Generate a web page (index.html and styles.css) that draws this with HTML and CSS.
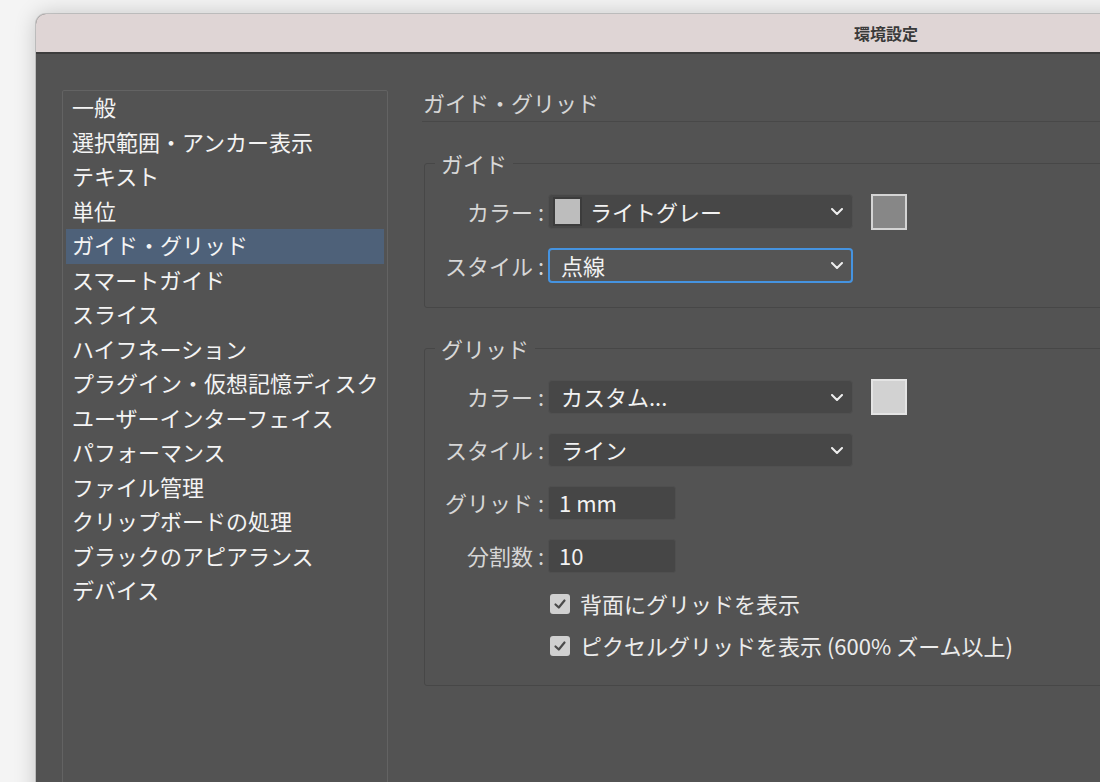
FILE: index.html
```html
<!DOCTYPE html>
<html lang="ja">
<head>
<meta charset="utf-8">
<title>環境設定</title>
<link rel="stylesheet" href="styles.css">
</head>
<body>
<div class="window">
  <div class="titlebar"><span class="title">環境設定</span></div>
  <div class="content">
    <ul class="sidebar">
      <li>一般</li>
      <li>選択範囲・アンカー表示</li>
      <li>テキスト</li>
      <li>単位</li>
      <li class="selected">ガイド・グリッド</li>
      <li>スマートガイド</li>
      <li>スライス</li>
      <li>ハイフネーション</li>
      <li>プラグイン・仮想記憶ディスク</li>
      <li>ユーザーインターフェイス</li>
      <li>パフォーマンス</li>
      <li>ファイル管理</li>
      <li>クリップボードの処理</li>
      <li>ブラックのアピアランス</li>
      <li>デバイス</li>
    </ul>
    <div class="pane">
      <h1 class="pane-title">ガイド・グリッド</h1>

      <fieldset class="group guide">
        <legend>ガイド</legend>
        <div class="rows">
          <div class="row">
            <span class="lbl">カラー :</span>
            <div class="select">
              <span class="chip"></span>
              <span class="val">ライトグレー</span>
              <svg class="chev" width="12" height="7" viewBox="0 0 12 7"><polyline points="1,1 6,6 11,1" fill="none" stroke="#eeeeee" stroke-width="2" stroke-linecap="round" stroke-linejoin="round"/></svg>
            </div>
            <span class="swatch swatch-mid"></span>
          </div>
          <div class="row">
            <span class="lbl">スタイル :</span>
            <div class="select focused">
              <span class="val">点線</span>
              <svg class="chev" width="12" height="7" viewBox="0 0 12 7"><polyline points="1,1 6,6 11,1" fill="none" stroke="#eeeeee" stroke-width="2" stroke-linecap="round" stroke-linejoin="round"/></svg>
            </div>
          </div>
        </div>
      </fieldset>

      <fieldset class="group grid">
        <legend>グリッド</legend>
        <div class="rows">
          <div class="row">
            <span class="lbl">カラー :</span>
            <div class="select">
              <span class="val">カスタム...</span>
              <svg class="chev" width="12" height="7" viewBox="0 0 12 7"><polyline points="1,1 6,6 11,1" fill="none" stroke="#eeeeee" stroke-width="2" stroke-linecap="round" stroke-linejoin="round"/></svg>
            </div>
            <span class="swatch swatch-light"></span>
          </div>
          <div class="row">
            <span class="lbl">スタイル :</span>
            <div class="select">
              <span class="val">ライン</span>
              <svg class="chev" width="12" height="7" viewBox="0 0 12 7"><polyline points="1,1 6,6 11,1" fill="none" stroke="#eeeeee" stroke-width="2" stroke-linecap="round" stroke-linejoin="round"/></svg>
            </div>
          </div>
          <div class="row">
            <span class="lbl">グリッド :</span>
            <div class="input">1 mm</div>
          </div>
          <div class="row">
            <span class="lbl">分割数 :</span>
            <div class="input">10</div>
          </div>
        </div>
        <div class="checks">
          <div class="check-row">
            <span class="checkbox"><svg width="20" height="20" viewBox="0 0 20 20"><polyline points="5.5,10.5 8.8,13.5 14.5,6.5" fill="none" stroke="#4a4a4a" stroke-width="2.2" stroke-linecap="round" stroke-linejoin="round"/></svg></span>
            <span class="check-text">背面にグリッドを表示</span>
          </div>
          <div class="check-row">
            <span class="checkbox"><svg width="20" height="20" viewBox="0 0 20 20"><polyline points="5.5,10.5 8.8,13.5 14.5,6.5" fill="none" stroke="#4a4a4a" stroke-width="2.2" stroke-linecap="round" stroke-linejoin="round"/></svg></span>
            <span class="check-text">ピクセルグリッドを表示 (600% ズーム以上)</span>
          </div>
        </div>
      </fieldset>
    </div>
  </div>
</div>
</body>
</html>
```

FILE: styles.css
```css
html, body {
  margin: 0;
  padding: 0;
  overflow: hidden;
  width: 1100px;
  height: 782px;
  background: #f4f4f4;
}

body {
  font-family: "Noto Sans CJK JP", "Noto Sans", "Liberation Sans", sans-serif;
  padding: 14px 0 0 36px;
  box-sizing: border-box;
}

.window {
  width: 1700px;
  height: 820px;
  border-top-left-radius: 10px;
  border-top-right-radius: 10px;
  overflow: hidden;
  box-shadow: 0 0 22px rgba(0, 0, 0, 0.2), 0 0 0 1px #cfcfcf;
  background: #535353;
}

.titlebar {
  height: 40px;
  background: #dfd5d5;
  border-bottom: 2px solid #3d3d3d;
  box-sizing: border-box;
  display: flex;
  align-items: center;
  justify-content: center;
}

.title {
  font-size: 16px;
  font-weight: bold;
  color: #3a3a3a;
  line-height: 20px;
  margin-top: 0;
}

.content {
  display: flex;
  gap: 34px;
  padding: 36px 0 0 26px;
}

.sidebar {
  list-style: none;
  margin: 0;
  padding: 0 3px;
  width: 326px;
  height: 760px;
  box-sizing: border-box;
  border: 1px solid #636363;
  border-radius: 2px;
  flex: none;
}

.sidebar li {
  font-size: 22px;
  line-height: 31.5px;
  height: 34.5px;
  padding-bottom: 3px;
  box-sizing: border-box;
  color: #f4f4f4;
  padding-left: 6px;
  white-space: nowrap;
}

.sidebar li.selected {
  background: #4e6179;
}

.pane {
  width: 760px;
  flex: none;
}

.pane-title {
  margin: 0;
  padding: 0 0 7px 1px;
  font-size: 22px;
  line-height: 24px;
  font-weight: normal;
  color: #d6d6d6;
  border-bottom: 1px solid #484848;
}

.group {
  margin: 29px 0 0 2px;
  padding: 0;
  border: 1px solid #474747;
  border-radius: 3px;
  min-width: 0;
}

.group legend {
  margin-left: 10px;
  padding: 0 6px;
  font-size: 22px;
  line-height: 24px;
  color: #d8d8d8;
}

.guide {
  padding: 19px 0 24px 0;
}

.grid {
  margin-top: 28px;
  padding: 20px 0 24px 0;
}

.rows {
  display: flex;
  flex-direction: column;
  gap: 19px;
}

.row {
  display: flex;
  align-items: center;
  height: 35px;
}

.grid .row {
  height: 34px;
}

.lbl {
  width: 119px;
  margin-right: 4px;
  text-align: right;
  font-size: 22px;
  line-height: 28px;
  padding-bottom: 2px;
  color: #d6d6d6;
  white-space: nowrap;
  flex: none;
}

.select {
  width: 305px;
  height: 100%;
  box-sizing: border-box;
  background: #474747;
  border: 1px solid #505050;
  border-radius: 4px;
  display: flex;
  align-items: center;
  padding: 0 9px 0 12px;
  flex: none;
}

.select.focused {
  background: #555555;
  border: 2px solid #4593e0;
  padding-left: 11px;
  padding-right: 8px;
}

.chip {
  width: 25px;
  height: 25px;
  border: 2px solid #3c3c3c;
  background: #bdbdbd;
  margin-left: -8px;
  margin-right: 8px;
  flex: none;
}

.val {
  flex: 1;
  font-size: 22px;
  line-height: 28px;
  padding-bottom: 2px;
  color: #f2f2f2;
  white-space: nowrap;
}

.chev {
  flex: none;
  display: block;
}

.swatch {
  width: 36px;
  height: 36px;
  box-sizing: border-box;
  margin-left: 18px;
  flex: none;
}

.swatch-mid {
  background: #878787;
  border: 2px solid #d4d4d4;
}

.swatch-light {
  background: #d2d2d2;
  border: 2px solid #e4e4e4;
}

.input {
  width: 128px;
  height: 100%;
  box-sizing: border-box;
  background: #464646;
  border: 1px solid #4f4f4f;
  border-radius: 3px;
  padding: 0 0 3px 10px;
  display: flex;
  align-items: center;
  font-size: 22px;
  line-height: 28px;
  color: #f2f2f2;
  flex: none;
}

.checks {
  margin: 16px 0 0 125px;
  display: flex;
  flex-direction: column;
  gap: 12px;
}

.check-row {
  display: flex;
  align-items: center;
  height: 30px;
}

.checkbox {
  width: 20px;
  height: 20px;
  background: #d0d0d0;
  border-radius: 3px;
  margin-right: 10px;
  flex: none;
}

.checkbox svg {
  display: block;
}

.check-text {
  font-size: 22px;
  line-height: 28px;
  padding-bottom: 2px;
  color: #ececec;
  white-space: nowrap;
}
```
